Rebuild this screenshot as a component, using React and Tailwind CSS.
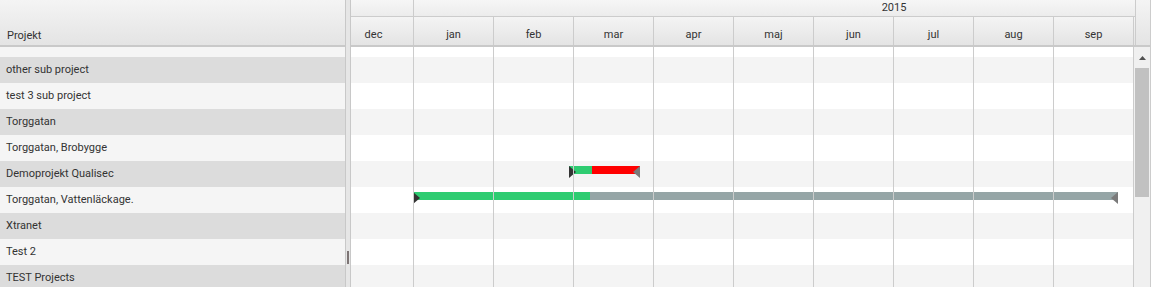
import React from "react";

const rows = [
  { name: "other sub project" },
  { name: "test 3 sub project" },
  { name: "Torggatan" },
  { name: "Torggatan, Brobygge" },
  { name: "Demoprojekt Qualisec", bar: 1 },
  { name: "Torggatan, Vattenläckage.", bar: 2 },
  { name: "Xtranet" },
  { name: "Test 2" },
  { name: "TEST Projects" },
];

const months = ["dec", "jan", "feb", "mar", "apr", "maj", "jun", "jul", "aug", "sep"];

function StartMark() {
  return (
    <svg className="absolute left-0 top-0" width="7" height="12" viewBox="0 0 7 12">
      <polygon points="0,0 7,6 0,12" fill="#333333" />
    </svg>
  );
}

function EndMark() {
  return (
    <svg className="absolute right-0 top-0" width="7" height="12" viewBox="0 0 7 12">
      <polygon points="7,0 0,6 7,12" fill="#7a7a7a" />
    </svg>
  );
}

function Bar({ kind }) {
  if (kind === 1) {
    return (
      <div className="absolute left-[218px] top-[5px] h-[12px] w-[71px]">
        <div className="flex h-[8px] w-full">
          <div className="h-full w-[23px] bg-[#2ecc71]" />
          <div className="h-full flex-1 bg-[#ff0000]" />
        </div>
        <StartMark />
        <EndMark />
      </div>
    );
  }
  return (
    <div className="absolute left-[62px] top-[5px] h-[12px] w-[705px]">
      <div className="flex h-[8px] w-full">
        <div className="h-full w-[177px] bg-[#2ecc71]" />
        <div className="h-full flex-1 bg-[#95a5a6]" />
      </div>
      <StartMark />
      <EndMark />
    </div>
  );
}

export default function App() {
  return (
    <div className="flex h-[287px] w-[1153px] overflow-hidden bg-white font-['Roboto',sans-serif] text-[11px] text-[#333333]">
      {/* Left panel */}
      <div className="flex w-[345px] shrink-0 flex-col">
        <div className="flex h-[47px] shrink-0 items-end border-b-2 border-[#c9c9c9] bg-gradient-to-b from-[#f4f4f4] to-[#e4e4e4] pb-[2px] pl-[7px] leading-[14px]">
          Projekt
        </div>
        <div className="h-[10px] shrink-0 bg-[#f5f5f5]" />
        {rows.map((r, i) => (
          <div
            key={r.name}
            className={
              "flex h-[26px] shrink-0 items-center pl-[6px] " +
              (i % 2 === 0 ? "bg-[#dcdcdc]" : "bg-[#f5f5f5]")
            }
          >
            {r.name}
          </div>
        ))}
      </div>

      {/* Splitter */}
      <div className="flex w-[6px] shrink-0 flex-col border-x border-[#c8c8c8] bg-[#e6e6e6]">
        <div className="mx-auto mt-[251px] h-[13px] w-[2px] bg-[#7d7575]" />
      </div>

      {/* Chart */}
      <div className="flex w-[800px] shrink-0 flex-col border-r border-[#cccccc]">
        {/* Header */}
        <div className="flex h-[47px] shrink-0 border-b-2 border-[#c9c9c9]">
          <div className="w-[785px] shrink-0 overflow-hidden border-r border-[#cccccc]">
            <div className="flex h-[17px] w-[1100px] -translate-x-[17px] border-b border-[#cccccc] bg-gradient-to-b from-[#f6f6f6] to-[#ececec]">
              <div className="h-full w-[80px] shrink-0 border-r border-[#cccccc]" />
              <div className="flex h-full w-[960px] shrink-0 items-center justify-center leading-[14px]">
                2015
              </div>
            </div>
            <div className="flex h-[28px] w-[1100px] -translate-x-[17px] bg-gradient-to-b from-[#f4f4f4] to-[#e4e4e4]">
              {months.map((m) => (
                <div
                  key={m}
                  className="flex h-full w-[80px] shrink-0 items-end justify-center border-r border-[#cccccc] pb-[3px] leading-[14px]"
                >
                  {m}
                </div>
              ))}
            </div>
          </div>
          <div className="flex-1 bg-gradient-to-b from-[#f4f4f4] to-[#e4e4e4]" />
        </div>

        {/* Body */}
        <div className="flex min-h-0 flex-1">
          <div className="relative w-[783px] shrink-0 overflow-hidden">
            <div className="h-[10px] bg-white" />
            {rows.map((r, i) => (
              <div
                key={r.name}
                className={"relative h-[26px] " + (i % 2 === 0 ? "bg-[#f4f4f4]" : "bg-white")}
              >
                {r.bar ? <Bar kind={r.bar} /> : null}
              </div>
            ))}
            {/* column grid lines overlay */}
            <div className="pointer-events-none absolute inset-y-0 left-[-17px] flex">
              {months.map((m) => (
                <div key={m} className="h-full w-[80px] shrink-0 border-r border-[#cccccc]" />
              ))}
            </div>
          </div>
          {/* Scrollbar */}
          <div className="flex w-[16px] shrink-0 flex-col bg-[#f0f0f0] px-[1px]">
            <div className="flex h-[21px] items-center justify-center">
              <svg width="7" height="4" viewBox="0 0 7 4">
                <polygon points="0,4 3.5,0 7,4" fill="#505050" />
              </svg>
            </div>
            <div className="h-[129px] bg-[#c1c1c1]" />
          </div>
        </div>
      </div>
    </div>
  );
}
